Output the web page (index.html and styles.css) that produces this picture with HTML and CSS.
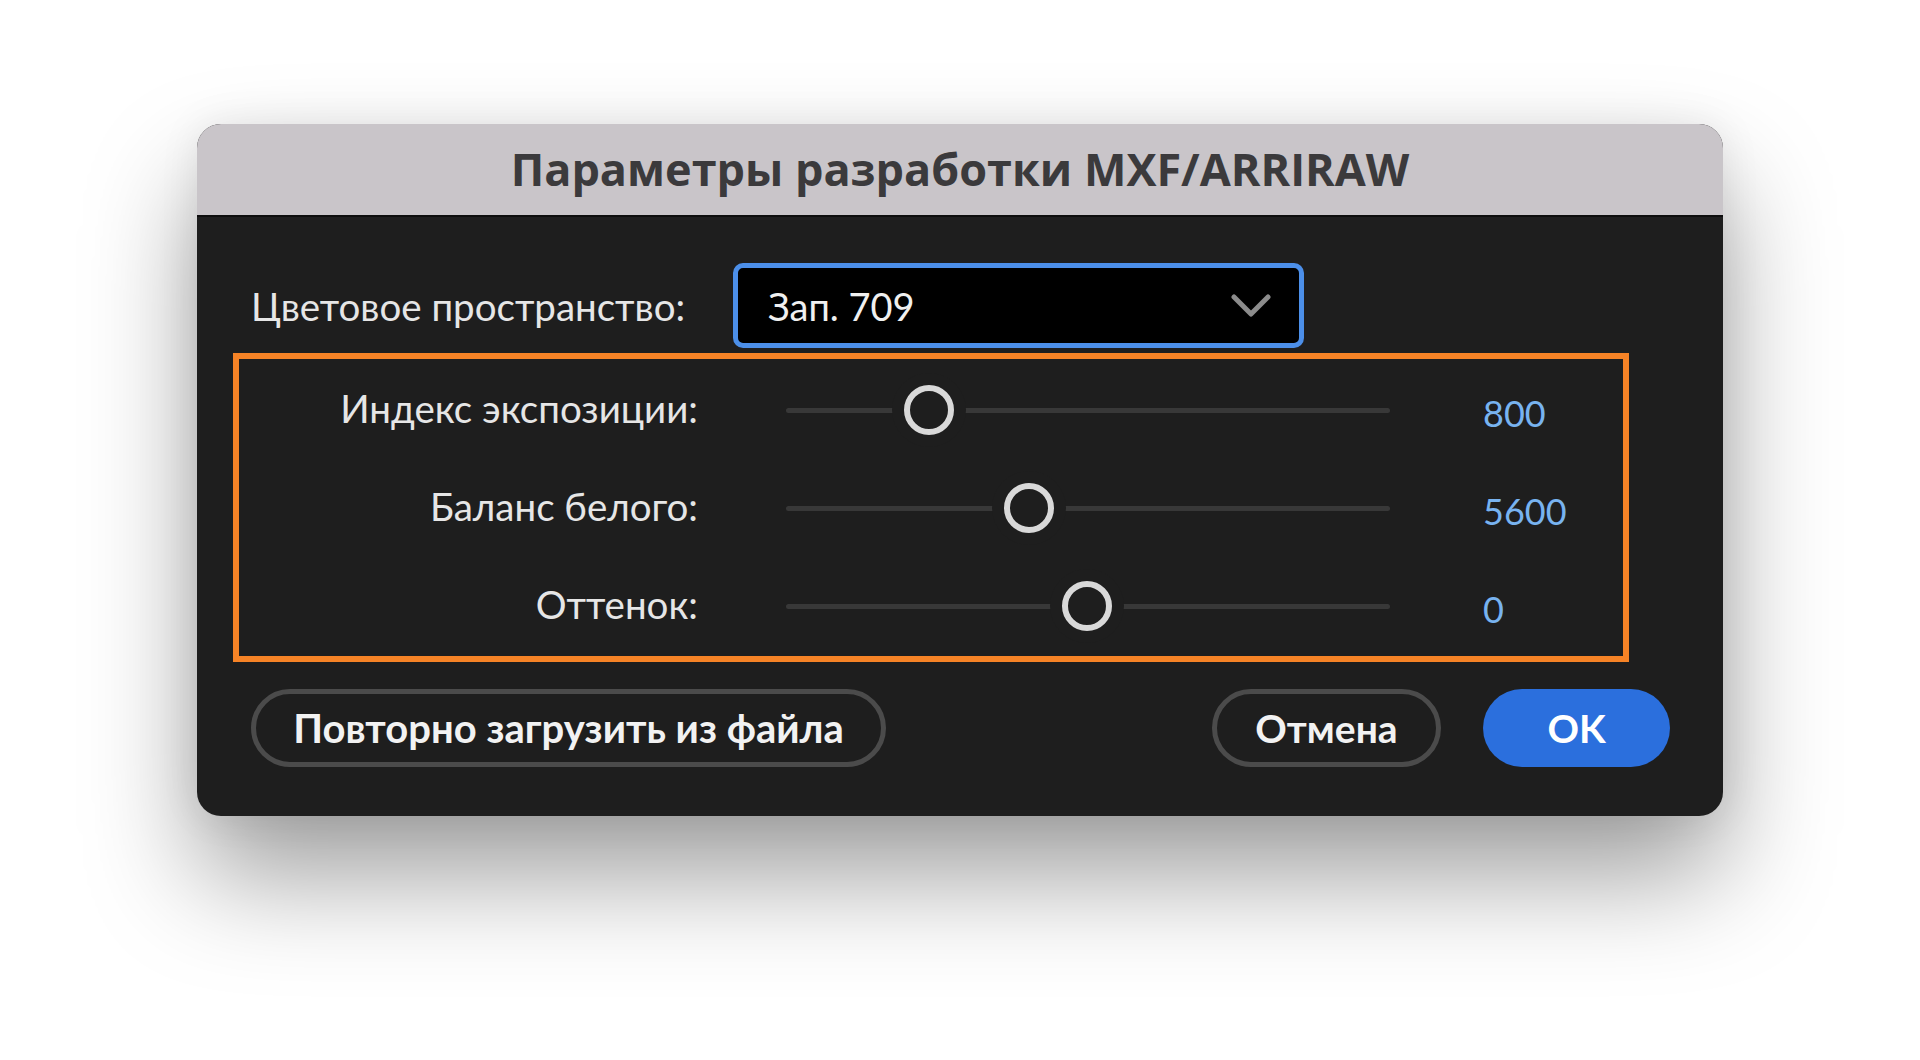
FILE: index.html
```html
<!DOCTYPE html>
<html lang="ru">
<head>
    <meta charset="UTF-8">
    <meta name="viewport" content="width=device-width, initial-scale=1.0">
    <title>Параметры разработки MXF/ARRIRAW</title>
    <link rel="stylesheet" href="styles.css">
</head>
<body>
    <div class="dialog">
        <div class="titlebar">Параметры разработки MXF/ARRIRAW</div>

        <div class="content">
            <div class="space-row">
                <span class="space-label">Цветовое пространство:</span>
                <div class="select">
                    <span class="select-value">Зап. 709</span>
                    <svg class="chevron" width="40" height="24" viewBox="0 0 40 24">
                        <polyline points="3,3 20,20 37,3" fill="none" stroke="#8c8c8c" stroke-width="5" stroke-linecap="round" stroke-linejoin="round"/>
                    </svg>
                </div>
            </div>

            <div class="highlight">
                <div class="param">
                    <span class="param-label">Индекс экспозиции:</span>
                    <div class="slider">
                        <div class="track"></div>
                        <div class="thumb" style="left: 23.7%"></div>
                    </div>
                    <span class="value">800</span>
                </div>
                <div class="param">
                    <span class="param-label">Баланс белого:</span>
                    <div class="slider">
                        <div class="track"></div>
                        <div class="thumb" style="left: 40.2%"></div>
                    </div>
                    <span class="value">5600</span>
                </div>
                <div class="param">
                    <span class="param-label">Оттенок:</span>
                    <div class="slider">
                        <div class="track"></div>
                        <div class="thumb" style="left: 49.8%"></div>
                    </div>
                    <span class="value">0</span>
                </div>
            </div>

            <div class="actions">
                <button type="button" class="btn btn-secondary btn-reload">Повторно загрузить из файла</button>
                <div class="actions-right">
                    <button type="button" class="btn btn-secondary btn-cancel">Отмена</button>
                    <button type="button" class="btn btn-primary btn-ok">OK</button>
                </div>
            </div>
        </div>
    </div>
</body>
</html>
```

FILE: styles.css
```css
html, body {
    margin: 0;
    height: 100%;
}

body {
    box-sizing: border-box;
    padding: 124px 0 0 197px;
    background-color: #ffffff;
    font-family: Lato, "Noto Sans", sans-serif;
}

.dialog {
    width: 1526px;
    background: #1e1e1e;
    border-radius: 24px;
    overflow: hidden;
    box-shadow: 0 60px 110px rgba(0,0,0,0.38), 0 0 40px rgba(0,0,0,0.08);
}

.titlebar {
    height: 91px;
    background: #c9c5c9;
    border-bottom: 2px solid #0e0e0e;
    color: #3b3a3c;
    font-family: "Open Sans", sans-serif;
    font-weight: 700;
    font-size: 45px;
    display: flex;
    align-items: center;
    justify-content: center;
    padding-bottom: 2px;
    box-sizing: border-box;
    height: 93px;
}

.content {
    padding: 46px 53px 49px 36px;
}

.space-row {
    display: flex;
    align-items: center;
    padding-left: 18px;
}

.space-label {
    width: 482px;
    color: #e6e6e6;
    font-size: 38.5px;
}

.select {
    box-sizing: border-box;
    width: 571px;
    height: 85px;
    background: #000;
    border: 5px solid #4c8fe9;
    border-radius: 10px;
    display: flex;
    align-items: center;
    justify-content: space-between;
    padding: 0 28px 0 30px;
}

.select-value {
    color: #f0f0f0;
    font-size: 38px;
}

.highlight {
    box-sizing: border-box;
    width: 1396px;
    height: 309px;
    margin-top: 5px;
    border: 6px solid #f68326;
    padding-top: 2px;
}

.param {
    display: flex;
    align-items: center;
    height: 98px;
}

.param-label {
    width: 459px;
    text-align: right;
    color: #e6e6e6;
    font-size: 38.5px;
    padding-bottom: 4px;
}

.slider {
    position: relative;
    width: 604px;
    height: 52px;
    margin-left: 88px;
    display: flex;
    align-items: center;
}

.track {
    width: 100%;
    height: 5px;
    border-radius: 3px;
    background: #383838;
}

.thumb {
    position: absolute;
    top: 50%;
    width: 38px;
    height: 38px;
    border: 6px solid #d9d9d9;
    border-radius: 50%;
    background: #1e1e1e;
    transform: translate(-50%, -50%);
    box-shadow: 0 0 0 12px #1e1e1e;
}

.value {
    margin-left: 93px;
    padding-top: 6px;
    color: #78b3f0;
    font-size: 36px;
}

.actions {
    display: flex;
    justify-content: space-between;
    margin-top: 27px;
    padding-left: 18px;
}

.actions-right {
    display: flex;
    gap: 42px;
}

.btn {
    box-sizing: border-box;
    height: 78px;
    border-radius: 39px;
    font-family: Lato, "Noto Sans", sans-serif;
    font-weight: 700;
    font-size: 39px;
    color: #f2f2f2;
    cursor: pointer;
    padding: 0;
}

.btn-secondary {
    background: transparent;
    border: 5px solid #4b4b4b;
}

.btn-primary {
    background: #2b6fdd;
    border: none;
    color: #ffffff;
}

.btn-reload {
    width: 635px;
    font-size: 40px;
}

.btn-cancel {
    width: 229px;
}

.btn-ok {
    width: 187px;
}
```
